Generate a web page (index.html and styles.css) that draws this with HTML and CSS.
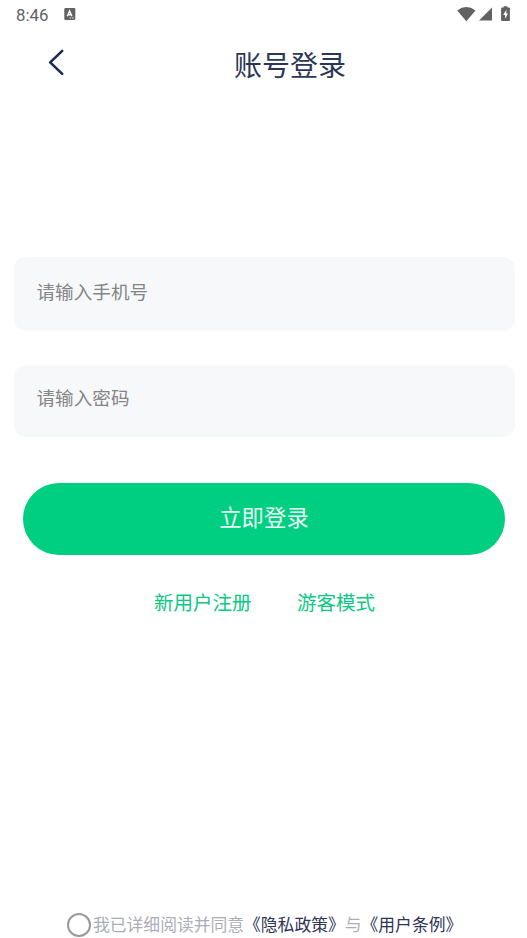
FILE: index.html
```html
<!DOCTYPE html>
<html lang="zh-CN">
<head>
<meta charset="utf-8">
<meta name="viewport" content="width=device-width, initial-scale=1">
<title>账号登录</title>
<link rel="stylesheet" href="styles.css">
</head>
<body>
<div class="status">
  <span class="clock">8:46</span>
  <svg class="app-icon" width="12" height="12" viewBox="0 0 12 12"><rect x=".3" y="0" width="11" height="12" rx="1.2" fill="#626262"/><path d="M3.3 8.3 5.6 3l2.3 5.3M4.2 6.7H7" fill="none" stroke="#fff" stroke-width="1.4"/><path d="M5.6 10h1.5M8.2 10h1.5" stroke="#fff" stroke-width=".9"/></svg>
  <div class="signals">
    <svg width="19" height="15" viewBox="0 0 19 15"><path d="M.2 3.5Q9.300-3.300 18.500 3.500L9.350 14.200Z" fill="#626262"/></svg>
    <svg width="13" height="14" viewBox="0 0 13 14"><path d="M13 .4V13.500H0Z" fill="#626262"/></svg>
    <svg class="battery" width="9" height="16" viewBox="0 0 9 16"><path d="M2.600 1.600V.2h3.800v1.400H8q.9 0 .9.900v11.600q0 .9-.9.900H1q-.9 0-.9-.9V2.500q0-.9.9-.9Z" fill="#626262"/><path d="M5.400 3.800 2.200 8.900h1.900v3.900l3-5.400H5.300Z" fill="#fff"/></svg>
  </div>
</div>
<header class="header">
  <svg class="back" width="18" height="28" viewBox="0 0 18 28"><path d="M15.200 2.900 3.200 14.400l12 11.500" fill="none" stroke="#1b2a58" stroke-width="2.600" stroke-linecap="round" stroke-linejoin="round"/></svg>
  <h1 class="title">账号登录</h1>
</header>
<main class="form">
  <input class="field phone" type="tel" placeholder="请输入手机号">
  <input class="field password" type="password" placeholder="请输入密码">
  <button class="submit" type="button">立即登录</button>
  <nav class="links"><a>新用户注册</a><a>游客模式</a></nav>
</main>
<footer class="agreement">
  <span class="radio"></span>
  <p class="terms">我已详细阅读并同意<a>《隐私政策》</a>与<a>《用户条例》</a></p>
</footer>
</body>
</html>
```
FILE: styles.css
```css
* { box-sizing: border-box; }
body {
  margin: 0;
  height: 938px;
  display: flex;
  flex-direction: column;
  overflow: hidden;
  background: #fff;
  font-family: "Noto Sans CJK SC", sans-serif;
}
svg { display: block; flex: none; }
.status {
  display: flex;
  align-items: center;
  height: 28px;
  padding: 0 17px 0 16px;
  color: #626262;
}
.clock {
  width: 48px;
  font: 16.8px/28px Roboto, sans-serif;
  padding-top: 2px;
}
.signals {
  display: flex;
  align-items: center;
  margin-left: auto;
}
.signals svg + svg { margin-left: 3px; }
.signals .battery { margin-left: 9px; }
.header {
  display: flex;
  align-items: center;
  height: 72px;
  padding-left: 47px;
}
.back { margin-top: -4px; }
.title {
  margin: 0 0 0 169px;
  font-size: 28px;
  font-weight: 400;
  line-height: 40px;
  color: #2b3757;
}
.form {
  display: flex;
  flex-direction: column;
  padding: 157px 12px 0 14px;
}
.field {
  width: 100%;
  border: 0;
  border-radius: 12px;
  outline: 0;
  background: #f7f8fa;
  font-family: inherit;
  font-size: 18.6px;
}
.field::placeholder { color: #858585; opacity: 1; }
.phone { height: 74px; padding: 0 22.5px 8px; }
.password { height: 72px; margin-top: 34px; padding: 0 22.5px 9px; }
.submit {
  height: 72px;
  margin: 46px 10px 0 9px;
  padding: 0 0 6px;
  border: 0;
  border-radius: 36px;
  background: #00ce80;
  color: #e8fff5;
  font-family: inherit;
  font-size: 22.4px;
}
.links {
  display: flex;
  justify-content: center;
  gap: 45.5px;
  margin: 32px 0 0;
  font-size: 19.5px;
  line-height: 30px;
  color: #0bc982;
}
.agreement {
  display: flex;
  align-items: center;
  margin-top: auto;
  padding: 0 0 0 67px;
}
.radio {
  width: 24px;
  height: 24px;
  margin-right: 2px;
  border: 2px solid #999;
  border-radius: 50%;
}
.terms {
  margin: 0 0 2px;
  font-size: 16.8px;
  line-height: 24px;
  white-space: nowrap;
  color: #abaeb9;
}
.terms a { color: #2d3454; }
```
